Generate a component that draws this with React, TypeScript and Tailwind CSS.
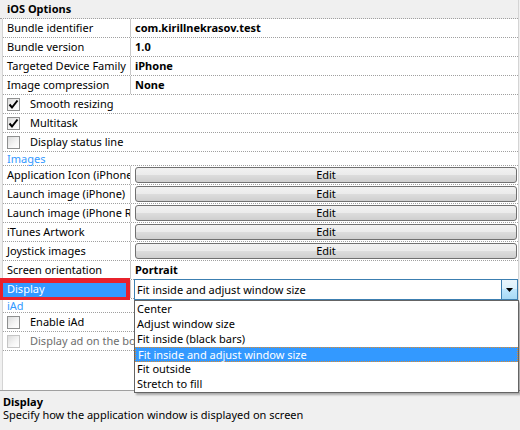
import React from "react";

const FONT = { fontFamily: '"Noto Sans", "Open Sans", sans-serif' };

function Check({ checked, disabled }: { checked?: boolean; disabled?: boolean }) {
  return (
    <div
      className={`w-[13px] h-[13px] border ${
        disabled ? "border-[#c5c5c5]" : "border-[#8e8f8f]"
      } bg-[linear-gradient(135deg,#dcdcdc_0%,#f6f6f6_60%,#ffffff_100%)] flex items-center justify-center shrink-0`}
    >
      {checked && (
        <svg width="11" height="11" viewBox="0 0 11 11">
          <path d="M1.5 5.5 L4 8.5 L9.5 1.5" stroke="#000" strokeWidth="2" fill="none" strokeLinejoin="miter" />
        </svg>
      )}
    </div>
  );
}

function PropRow({
  label,
  children,
  highlight,
}: {
  label: string;
  children?: React.ReactNode;
  highlight?: boolean;
}) {
  return (
    <div className="flex h-[19px] border-b border-dotted border-[#a0a0a0]">
      <div
        className={`w-[127px] pl-[4px] overflow-hidden whitespace-nowrap leading-[18px] ${
          highlight ? "bg-[#3399ff] text-white" : "text-black"
        }`}
      >
        {label}
      </div>
      <div className="w-px bg-[#c8c8c8]" />
      <div className="flex-1 relative flex items-center">{children}</div>
    </div>
  );
}

function ValueText({ children }: { children: React.ReactNode }) {
  return <div className="pl-[4px] font-bold leading-[18px] text-black">{children}</div>;
}

function EditBtn() {
  return (
    <div className="w-full pl-[4px] pr-[1px] flex items-center">
      <div className="w-full h-[16px] rounded-[3px] border border-[#707070] bg-[linear-gradient(#f2f2f2_0%,#ebebeb_50%,#dddddd_50%,#cfcfcf_100%)] flex items-center justify-center leading-[14px] text-black">
        Edit
      </div>
    </div>
  );
}

function CheckRow({ label, checked, disabled }: { label: string; checked?: boolean; disabled?: boolean }) {
  return (
    <div className="flex items-center h-[19px] border-b border-dotted border-[#a0a0a0] pl-[4px] whitespace-nowrap overflow-hidden">
      <Check checked={checked} disabled={disabled} />
      <span className={`ml-[10px] leading-[18px] ${disabled ? "text-[#6d6d6d]" : "text-black"}`}>{label}</span>
    </div>
  );
}

function Category({ label }: { label: string }) {
  return (
    <div className="h-[14px] border-b border-dotted border-[#a0a0a0] pl-[4px] leading-[13px] text-[#3399ff]">
      {label}
    </div>
  );
}

const options = [
  "Center",
  "Adjust window size",
  "Fit inside (black bars)",
  "Fit inside and adjust window size",
  "Fit outside",
  "Stretch to fill",
];

export default function App() {
  return (
    <div className="relative w-[520px] h-[430px] bg-[#f0f0f0] flex flex-col text-[11px] overflow-hidden" style={FONT}>
      <div className="flex-1 flex flex-col ml-[2px] mr-[1px] border-l border-r border-[#d4d4d4] bg-white">
        <div className="h-[19px] -ml-[3px] pl-[7px] bg-[#f0f0f0] border-b border-dotted border-[#a0a0a0] font-bold leading-[18px] text-black">
          iOS Options
        </div>
        <PropRow label="Bundle identifier">
          <ValueText>com.kirillnekrasov.test</ValueText>
        </PropRow>
        <PropRow label="Bundle version">
          <ValueText>1.0</ValueText>
        </PropRow>
        <PropRow label="Targeted Device Family">
          <ValueText>iPhone</ValueText>
        </PropRow>
        <PropRow label="Image compression">
          <ValueText>None</ValueText>
        </PropRow>
        <CheckRow label="Smooth resizing" checked />
        <CheckRow label="Multitask" checked />
        <CheckRow label="Display status line" />
        <Category label="Images" />
        <PropRow label="Application Icon (iPhone)">
          <EditBtn />
        </PropRow>
        <PropRow label="Launch image (iPhone)">
          <EditBtn />
        </PropRow>
        <PropRow label="Launch image (iPhone Retina)">
          <EditBtn />
        </PropRow>
        <PropRow label="iTunes Artwork">
          <EditBtn />
        </PropRow>
        <PropRow label="Joystick images">
          <EditBtn />
        </PropRow>
        <PropRow label="Screen orientation">
          <ValueText>Portrait</ValueText>
        </PropRow>
        <div className="relative z-10">
          <PropRow label="Display" highlight>
            <div className="absolute left-[3px] right-0 top-[-1px] h-[21px] border border-[#3c7fb1] bg-white flex">
              <div className="flex-1 pl-[2px] leading-[19px] text-black whitespace-nowrap">Fit inside and adjust window size</div>
              <div className="w-[16px] border-l border-[#3c7fb1] bg-[linear-gradient(#eaf6fd_0%,#d9f0fc_50%,#bee6fd_50%,#a7d9f5_100%)] flex items-center justify-center">
                <svg width="7" height="4" viewBox="0 0 7 4">
                  <path d="M0 0 L7 0 L3.5 4 Z" fill="#000" />
                </svg>
              </div>
            </div>
            <div className="absolute left-[3px] top-[20px] w-[385px] h-[93px] border border-[#646464] bg-white shadow-[2px_2px_2px_rgba(0,0,0,0.3)] py-[1px]">
              {options.map((o, i) => (
                <div
                  key={o}
                  className={`h-[15px] pl-[2px] leading-[14px] whitespace-nowrap ${
                    i === 3
                      ? "bg-[#3399ff] text-white border border-dotted border-[#e08a2a] pl-[1px]"
                      : "text-black"
                  }`}
                >
                  {o}
                </div>
              ))}
            </div>
          </PropRow>
        </div>
        <Category label="iAd" />
        <CheckRow label="Enable iAd" />
        <CheckRow label="Display ad on the board" disabled />
        <div className="flex-1" />
      </div>
      <div className="h-[40px] border-t border-[#a0a0a0] pl-[3px] pt-[4px] leading-[13px] text-black">
        <div className="font-bold">Display</div>
        <div>Specify how the application window is displayed on screen</div>
      </div>
      <div className="absolute z-20 left-0 top-[278px] w-[130px] h-[22px] border-t-[5px] border-b-[3px] border-l-[3px] border-r-[4px] border-[#e8212b]" />
    </div>
  );
}
